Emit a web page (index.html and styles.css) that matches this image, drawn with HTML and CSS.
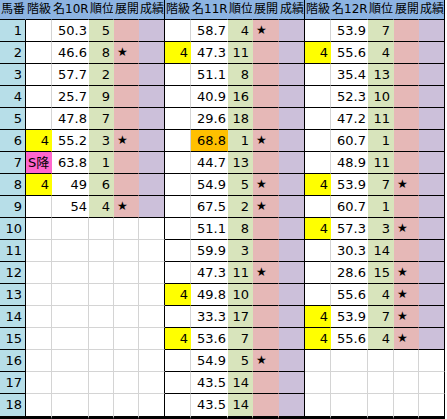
FILE: index.html
```html
<!DOCTYPE html>
<html>
<head>
  <meta charset="utf-8">
  <link rel="stylesheet" href="styles.css">
</head>
<body>
  <div id="board" class="board"></div>

  <script>
    // One entry per race: [階級, 名, 順位, 展開, orange]
    var races = [
      { name: "名10R", rows: [
        ["", "50.3", "5", ""],
        ["", "46.6", "8", "★"],
        ["", "57.7", "2", ""],
        ["", "25.7", "9", ""],
        ["", "47.8", "7", ""],
        ["4", "55.2", "3", "★"],
        ["S降", "63.8", "1", ""],
        ["4", "49", "6", ""],
        ["", "54", "4", "★"]
      ]},
      { name: "名11R", rows: [
        ["", "58.7", "4", "★"],
        ["4", "47.3", "11", ""],
        ["", "51.1", "8", ""],
        ["", "40.9", "16", ""],
        ["", "29.6", "18", ""],
        ["", "68.8", "1", "★", true],
        ["", "44.7", "13", ""],
        ["", "54.9", "5", "★"],
        ["", "67.5", "2", "★"],
        ["", "51.1", "8", ""],
        ["", "59.9", "3", ""],
        ["", "47.3", "11", "★"],
        ["4", "49.8", "10", ""],
        ["", "33.3", "17", ""],
        ["4", "53.6", "7", ""],
        ["", "54.9", "5", "★"],
        ["", "43.5", "14", ""],
        ["", "43.5", "14", ""]
      ]},
      { name: "名12R", rows: [
        ["", "53.9", "7", ""],
        ["4", "55.6", "4", ""],
        ["", "35.4", "13", ""],
        ["", "52.3", "10", ""],
        ["", "47.2", "11", ""],
        ["", "60.7", "1", ""],
        ["", "48.9", "11", ""],
        ["4", "53.9", "7", "★"],
        ["", "60.7", "1", ""],
        ["4", "57.3", "3", "★"],
        ["", "30.3", "14", ""],
        ["", "28.6", "15", "★"],
        ["", "55.6", "4", "★"],
        ["4", "53.9", "7", "★"],
        ["4", "55.6", "4", "★"]
      ]}
    ];

    var board = document.getElementById("board");

    function cell(text, cls) {
      var div = document.createElement("div");
      div.className = "cell " + cls;
      div.textContent = text;
      board.appendChild(div);
    }

    // Header row
    cell("馬番", "head");
    races.forEach(function (race) {
      cell("階級", "head");
      cell(race.name, "head");
      cell("順位", "head");
      cell("展開", "head");
      cell("成績", "head end");
    });

    // Horse rows
    for (var i = 0; i < 18; i++) {
      var last = i == 17 ? " last" : "";
      cell(i + 1, "num" + last);
      races.forEach(function (race) {
        var row = race.rows[i];
        if (!row) {
          cell("", "empty" + last);
          cell("", "empty" + last);
          cell("", "empty" + last);
          cell("", "empty" + last);
          cell("", "empty end" + last);
          return;
        }
        var kai = row[0] == "4" ? " kai-up" : row[0] == "S降" ? " kai-down" : "";
        cell(row[0], "filled kai" + kai + last);
        cell(row[1], "filled mei" + (row[4] ? " mei-hot" : "") + last);
        cell(row[2], "filled jun" + last);
        cell(row[3], "filled ten" + last);
        cell("", "filled sei end" + last);
      });
    }
  </script>
</body>
</html>
```

FILE: styles.css
```css
/* Page */
body {
  margin: 0;
  background-color: #fff;
}

/* Sheet grid: 馬番 + three races of five columns */
.board {
  display: grid;
  grid-template-columns:
    26px
    26px 37px 25px 25px 26px
    26px 37px 25px 26px 26px
    26px 37px 26px 25px 26px;
  grid-template-rows: 20px repeat(17, 22px) 25px;
  width: 445px;
}

/* Every cell */
.cell {
  box-sizing: border-box;
  border-right: 1px solid transparent;
  border-bottom: 1px solid #d4d4d4;
  padding: 0 2px;
  font-family: "DejaVu Sans", "Noto Sans CJK JP", sans-serif;
  font-size: 13px;
  line-height: 21px;
  color: #000;
  text-align: right;
  white-space: nowrap;
  overflow: hidden;
}

/* Header cells */
.head {
  background-color: #8db4e2;
  border-bottom-color: #000;
  padding: 0 0 0 1px;
  font-size: 12px;
  line-height: 19px;
  text-align: left;
}

/* 馬番 column */
.num {
  background-color: #b7dee8;
  border-right-color: #000;
  border-bottom-color: #000;
  padding-right: 3px;
}

/* Rows with race data */
.filled {
  border-bottom-color: #000;
}

.kai {
  border-right-color: #d4d4d4;
}

.kai-up {
  background-color: #ffff00;
  border-right-color: transparent;
}

.kai-down {
  background-color: #ff66cc;
  border-right-color: transparent;
}

.mei {
  padding-right: 1px;
}

.mei-hot {
  background-color: #ffc000;
}

.jun {
  background-color: #d8e4bc;
  padding-right: 3px;
}

.ten {
  background-color: #e6b8b7;
  padding-left: 3px;
  font-size: 12px;
  text-align: left;
}

.sei {
  background-color: #ccc0da;
}

/* Empty cells keep the sheet gridlines */
.empty {
  border-right-color: #d4d4d4;
}

/* Right edge of each race block */
.end {
  border-right-color: #000;
}

/* Thick line under the last row */
.last {
  border-bottom: 3px solid #000;
}
```
